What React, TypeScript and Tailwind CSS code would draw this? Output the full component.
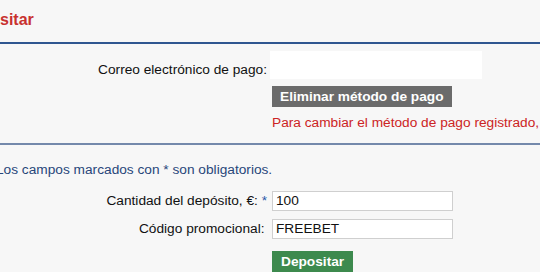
import React from "react";

export default function App() {
  return (
    <div
      className="w-[540px] h-[272px] overflow-hidden bg-[#f7f7f7] text-[13.7px] text-[#111]"
      style={{ fontFamily: '"Liberation Sans", Arial, sans-serif' }}
    >
      {/* Header */}
      <div className="h-[42px] pt-[11px]">
        <div className="ml-[-40px] text-[16px] leading-[18px] font-bold text-[#c8312f] whitespace-nowrap">
          Depositar
        </div>
      </div>
      <div className="h-[2px] bg-[#2f5690]" />

      {/* Payment method section */}
      <div className="pt-[7px]">
        <div className="flex">
          <div className="w-[267px] shrink-0 text-right leading-[16px] pt-[11px] whitespace-nowrap">
            Correo electrónico de pago:
          </div>
          <div className="ml-[3px] w-[212px] h-[28px] bg-white" />
        </div>
        <div className="flex mt-[7px]">
          <div className="w-[272px] shrink-0" />
          <button className="h-[21px] px-[8px] bg-[#6b6b6b] text-white font-bold leading-[21px] whitespace-nowrap">
            Eliminar método de pago
          </button>
        </div>
        <div className="flex mt-[8px]">
          <div className="w-[272px] shrink-0" />
          <div className="leading-[16px] text-[#cc2424] whitespace-nowrap">
            Para cambiar el método de pago registrado, póngase en contacto con el servicio de asistencia.
          </div>
        </div>
      </div>
      <div className="mt-[12px] h-[2px] bg-[#7489ab]" />

      {/* Deposit form */}
      <div className="pt-[17px]">
        <div className="ml-[-4px] leading-[16px] text-[#27467a] whitespace-nowrap">
          Los campos marcados con * son obligatorios.
        </div>
        <div className="flex items-center mt-[13px]">
          <div className="w-[267px] shrink-0 text-right whitespace-nowrap leading-[16px]">
            Cantidad del depósito, €: <span className="text-[#2a57a8]">*</span>
          </div>
          <input
            className="ml-[5px] w-[181px] h-[20px] bg-white border border-[#cfcfcf] px-[3px] text-[13.7px] text-[#111] outline-none"
            style={{ fontFamily: '"Liberation Sans", Arial, sans-serif' }}
            defaultValue="100"
          />
        </div>
        <div className="flex items-center mt-[8px]">
          <div className="w-[267px] shrink-0 text-right whitespace-nowrap leading-[16px] pr-[2.5px]">
            Código promocional:
          </div>
          <input
            className="ml-[5px] w-[181px] h-[20px] bg-white border border-[#cfcfcf] px-[3px] text-[13.7px] text-[#111] outline-none"
            style={{ fontFamily: '"Liberation Sans", Arial, sans-serif' }}
            defaultValue="FREEBET"
          />
        </div>
        <div className="flex mt-[12px]">
          <div className="w-[272px] shrink-0" />
          <button className="h-[22px] px-[9px] bg-[#3d8a4e] text-white font-bold leading-[22px] whitespace-nowrap">
            Depositar
          </button>
        </div>
      </div>
    </div>
  );
}
